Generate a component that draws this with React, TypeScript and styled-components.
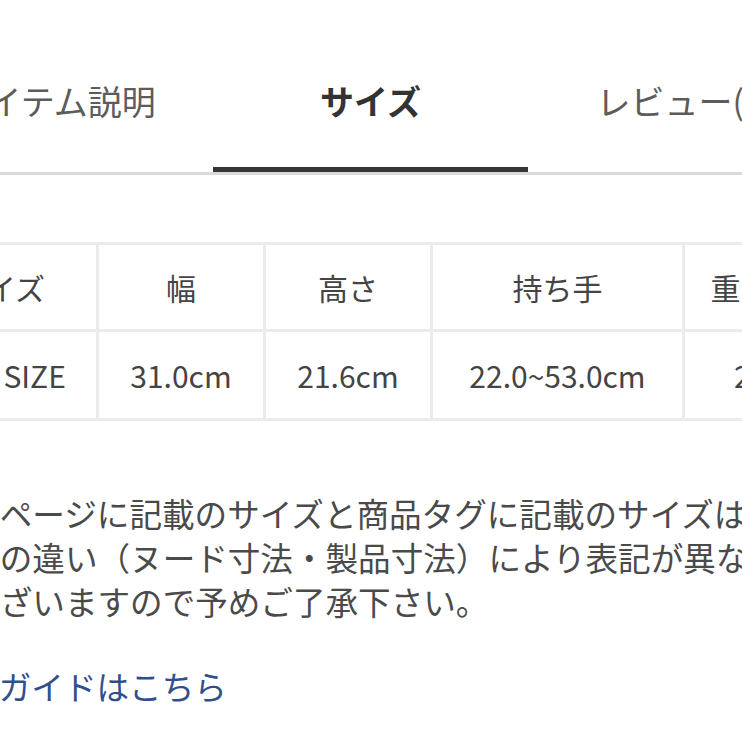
import React from "react";
import styled, { createGlobalStyle } from "styled-components";

const Global = createGlobalStyle`
  html, body { margin: 0; padding: 0; background: #fff; }
  body {
    font-family: "Noto Sans CJK JP", "Noto Sans", sans-serif;
    overflow: hidden;
  }
`;

const Viewport = styled.div`
  width: 742px;
  height: 742px;
  overflow: hidden;
  background: #fff;
`;

const Page = styled.div`
  width: 945px;
  margin-left: -102px;
  padding-top: 79px;
`;

const TabBar = styled.nav`
  display: grid;
  grid-template-columns: repeat(3, 1fr);
  border-bottom: 3px solid #dadada;
`;

const Tab = styled.div<{ $active?: boolean }>`
  text-align: center;
  font-size: 34px;
  line-height: 44px;
  padding-bottom: 44px;
  white-space: nowrap;
  color: ${(p) => (p.$active ? "#333333" : "#5c5c5c")};
  font-weight: ${(p) => (p.$active ? 700 : 400)};
  border-bottom: 5px solid ${(p) => (p.$active ? "#353535" : "transparent")};
`;

const Body = styled.section`
  padding: 0 4px;
`;

const SizeTable = styled.table`
  margin-top: 67px;
  border-collapse: collapse;
  table-layout: fixed;
  color: #444;
  font-size: 30px;
`;

const HeadCell = styled.th`
  height: 84px;
  padding: 0;
  font-weight: 400;
  text-align: center;
  white-space: nowrap;
  border: 3px solid #ebebeb;
`;

const DataCell = styled.td`
  height: 86px;
  padding: 0;
  text-align: center;
  white-space: nowrap;
  border: 3px solid #ebebeb;
`;

const Note = styled.p`
  margin: 70px 0 0;
  font-size: 32.6px;
  line-height: 44px;
  color: #4a4a4a;
  white-space: nowrap;
`;

const GuideLink = styled.a`
  display: block;
  margin-top: 41px;
  font-size: 32.6px;
  line-height: 44px;
  color: #31508b;
  text-decoration: none;
  white-space: nowrap;
`;

const columns = [
  { head: "サイズ", value: "ONE SIZE", width: 194 },
  { head: "幅", value: "31.0cm", width: 167 },
  { head: "高さ", value: "21.6cm", width: 167 },
  { head: "持ち手", value: "22.0~53.0cm", width: 252 },
  { head: "重さ(g)", value: "240", width: 151 },
];

export default function App() {
  return (
    <Viewport>
      <Global />
      <Page>
        <TabBar>
          <Tab>アイテム説明</Tab>
          <Tab $active>サイズ</Tab>
          <Tab>レビュー(0)</Tab>
        </TabBar>
        <Body>
          <SizeTable>
            <colgroup>
              {columns.map((c) => (
                <col key={c.head} style={{ width: c.width }} />
              ))}
            </colgroup>
            <thead>
              <tr>
                {columns.map((c) => (
                  <HeadCell key={c.head}>{c.head}</HeadCell>
                ))}
              </tr>
            </thead>
            <tbody>
              <tr>
                {columns.map((c) => (
                  <DataCell key={c.head}>{c.value}</DataCell>
                ))}
              </tr>
            </tbody>
          </SizeTable>
          <Note>
            ※このページに記載のサイズと商品タグに記載のサイズは、
            <br />
            測り方の違い（ヌード寸法・製品寸法）により表記が異なる場
            <br />
            合がございますので予めご了承下さい。
          </Note>
          <GuideLink href="#">サイズガイドはこちら</GuideLink>
        </Body>
      </Page>
    </Viewport>
  );
}
